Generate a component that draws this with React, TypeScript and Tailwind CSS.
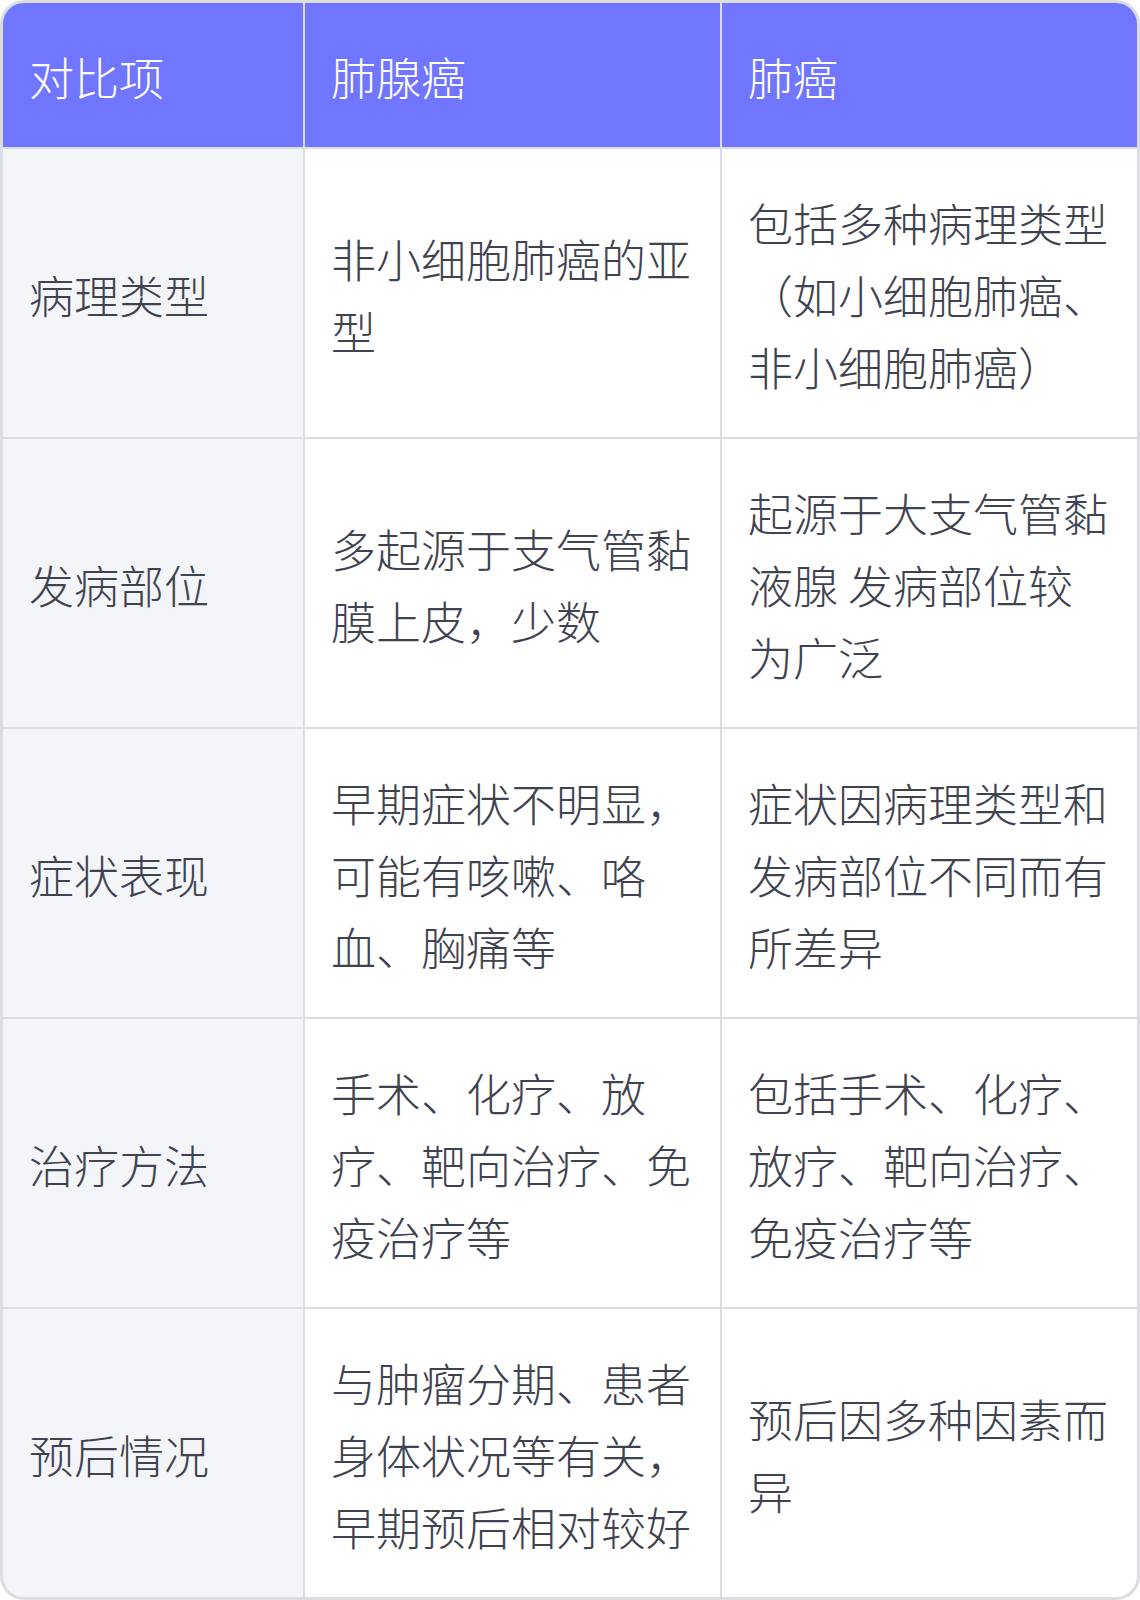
import React from "react";

const header = ["对比项", "肺腺癌", "肺癌"];
const rows: string[][] = [
  ["病理类型", "非小细胞肺癌的亚型", "包括多种病理类型（如小细胞肺癌、非小细胞肺癌）"],
  ["发病部位", "多起源于支气管黏膜上皮，少数", "起源于大支气管黏液腺 发病部位较为广泛"],
  ["症状表现", "早期症状不明显，可能有咳嗽、咯血、胸痛等", "症状因病理类型和发病部位不同而有所差异"],
  ["治疗方法", "手术、化疗、放疗、靶向治疗、免疫治疗等", "包括手术、化疗、放疗、靶向治疗、免疫治疗等"],
  ["预后情况", "与肿瘤分期、患者身体状况等有关，早期预后相对较好", "预后因多种因素而异"],
];

export default function App() {
  return (
    <div
      className="w-[1140px] h-[1600px] bg-white"
      style={{ fontFamily: '"Noto Sans CJK SC", "Noto Sans", sans-serif' }}
    >
      <div className="overflow-hidden rounded-[24px] border-[3px] border-[#dcdde3] bg-[#dcdde3]">
        <div className="grid grid-cols-[300px_415px_415px] gap-[2px] text-[45px] leading-[72px] font-light">
          {header.map((h, i) => (
            <div key={i} className="flex items-center bg-[#7076ff] pl-[26px] pr-[22px] pt-[38px] pb-[34px] text-white">
              {h}
            </div>
          ))}
          {rows.map((r, ri) =>
            r.map((c, ci) => (
              <div
                key={ri + "-" + ci}
                className={
                  "flex items-center pl-[26px] pr-[22px] pt-[38px] pb-[34px] text-[#3f4350] " +
                  (ci === 0 ? "bg-[#f4f5f9]" : "bg-white")
                }
              >
                <span className="min-h-[216px] flex items-center">{c}</span>
              </div>
            ))
          )}
        </div>
      </div>
    </div>
  );
}
